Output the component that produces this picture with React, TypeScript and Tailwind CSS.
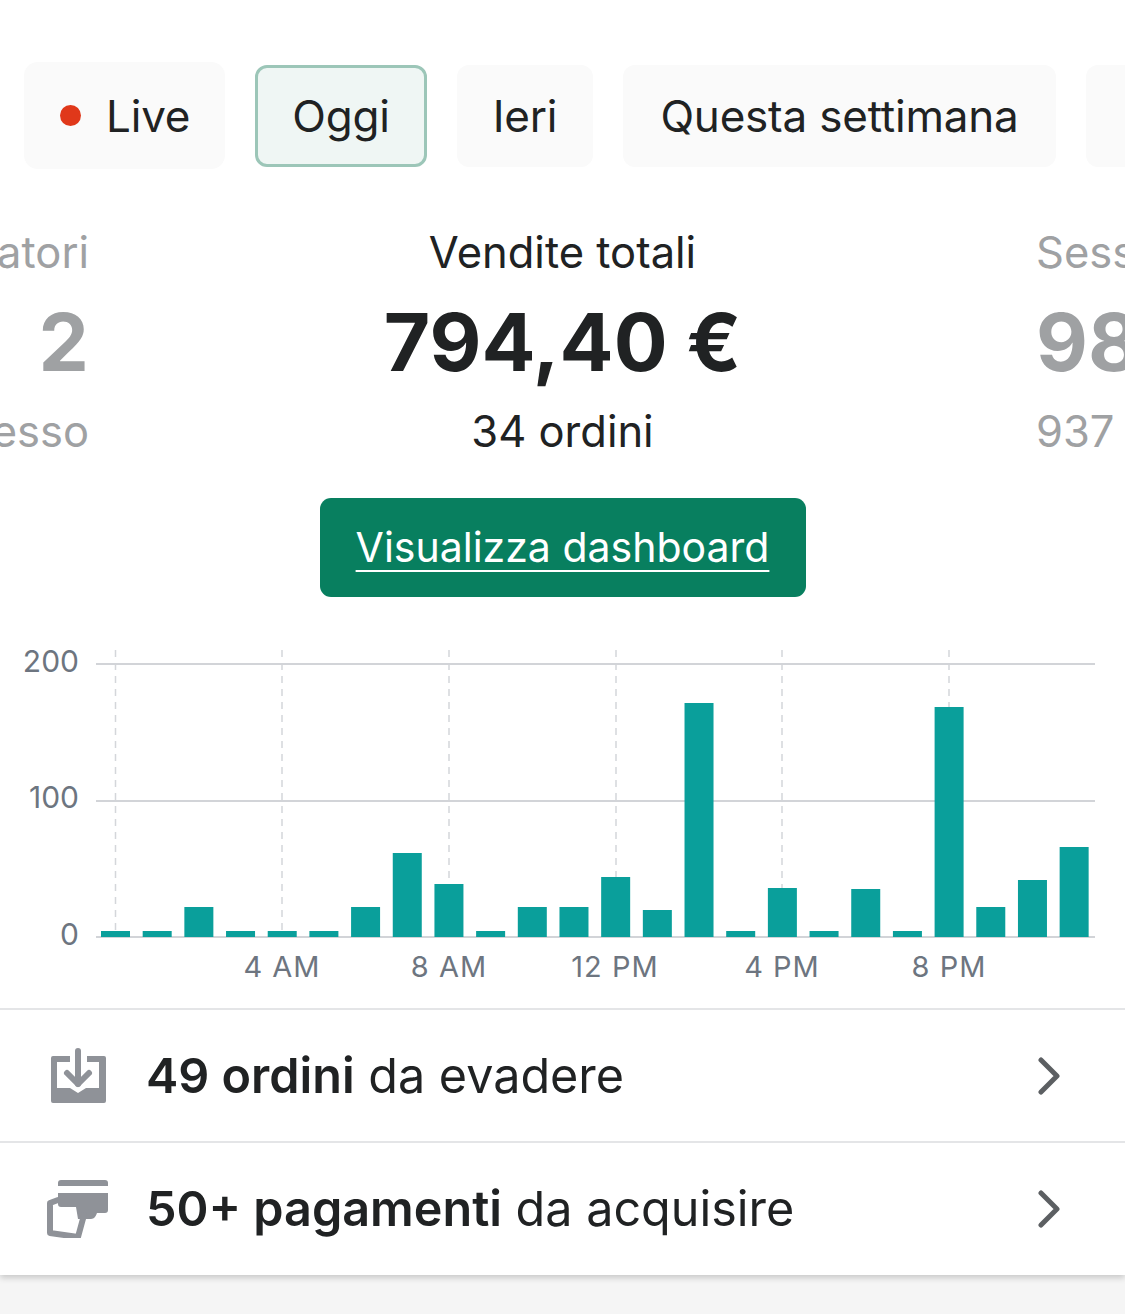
const tops = [931, 931, 907, 931, 931, 931, 907, 853, 884, 931, 907, 907, 877, 910, 703, 931, 888, 931, 889, 931, 707, 907, 880, 847];
const yLabels = [
  { label: "200", y: 672 },
  { label: "100", y: 808 },
  { label: "0", y: 945 },
];
const xLabels = [
  { label: "4 AM", x: 282 },
  { label: "8 AM", x: 449 },
  { label: "12 PM", x: 615 },
  { label: "4 PM", x: 782 },
  { label: "8 PM", x: 949 },
];

function Chart() {
  return (
    <svg viewBox="0 636 1125 372" className="block w-full h-[372px]" fontFamily="Inter, sans-serif">
      {[115.5, 282, 449, 616, 782, 949].map((x) => (
        <line key={x} x1={x} x2={x} y1={650} y2={937} stroke="#d4d6da" strokeWidth="1.5" strokeDasharray="7 6" />
      ))}
      {[664, 801, 937].map((y) => (
        <line key={y} x1={96} x2={1095} y1={y} y2={y} stroke="#d2d4d8" strokeWidth="2" />
      ))}
      {tops.map((top, i) => (
        <rect key={i} x={101 + i * 41.68} y={top} width={29} height={937 - top} fill="#0a9f9b" />
      ))}
      {yLabels.map((t) => (
        <text key={t.label} x={79} y={t.y} textAnchor="end" fontSize="30" fill="#6d7580">
          {t.label}
        </text>
      ))}
      {xLabels.map((t) => (
        <text key={t.label} x={t.x} y={977} textAnchor="middle" fontSize="29" letterSpacing="1" fill="#6d7580">
          {t.label}
        </text>
      ))}
    </svg>
  );
}

function InboxIcon() {
  return (
    <svg width="56" height="58" viewBox="0 0 56 58" fill="none">
      <path
        d="M3 9h17v6H7v26h13l8 5 8-5h13V15H37V9h17a2 2 0 0 1 2 2v43a2 2 0 0 1-2 2H3a2 2 0 0 1-2-2V11a2 2 0 0 1 2-2z"
        fill="#8f9298"
      />
      <path d="M28 4v33" stroke="#8f9298" strokeWidth="6" strokeLinecap="round" />
      <path d="M17 26l11 11 11-11" stroke="#8f9298" strokeWidth="6" strokeLinecap="round" strokeLinejoin="round" />
    </svg>
  );
}

function CardIcon() {
  return (
    <svg width="62" height="58" viewBox="0 0 62 58" fill="none">
      <path d="M14 0h44a3 3 0 0 1 3 3v3H11V3a3 3 0 0 1 3-3z" fill="#8f9298" />
      <path d="M11 13h50v17a3 3 0 0 1-3 3h-8c-1 3-3 6-6 6H31L29 27H14a3 3 0 0 1-3-3z" fill="#8f9298" />
      <path
        d="M11 20l-8 3v30l28 4 6-22"
        stroke="#8f9298"
        strokeWidth="6"
        strokeLinejoin="round"
        strokeLinecap="round"
      />
    </svg>
  );
}

function Chevron() {
  return (
    <svg width="24" height="38" viewBox="0 0 24 38" fill="none">
      <path d="M4 3l16 16L4 35" stroke="#5c5f62" strokeWidth="5" strokeLinecap="round" strokeLinejoin="round" />
    </svg>
  );
}

export default function App() {
  return (
    <div className="w-[1125px] h-[1314px] overflow-hidden bg-[#f5f5f5] font-['Inter',sans-serif] text-[#202223]">
      <div className="bg-white shadow-[0_3px_6px_rgba(0,0,0,0.18)]">
        {/* Date tabs */}
        <div className="flex items-center gap-[30px] pt-[62px] pl-[24px] overflow-hidden text-[44px] leading-[50px] tracking-[-0.2px]">
          <div className="flex items-center h-[107px] w-[201px] shrink-0 pl-[36px] rounded-[14px] bg-[#fafafa]">
            <span className="w-[21px] h-[21px] rounded-full bg-[#e0381a] mr-[25px]"></span>
            Live
          </div>
          <div className="flex items-center justify-center h-[102px] w-[172px] shrink-0 rounded-[12px] bg-[#eff6f4] border-[3px] border-[#9cc6b8]">
            Oggi
          </div>
          <div className="flex items-center justify-center h-[102px] w-[136px] shrink-0 rounded-[12px] bg-[#fafafa]">
            Ieri
          </div>
          <div className="flex items-center justify-center h-[102px] w-[433px] shrink-0 rounded-[12px] bg-[#fafafa] whitespace-nowrap">
            Questa settimana
          </div>
          <div className="h-[102px] w-[120px] shrink-0 rounded-[12px] bg-[#fafafa]"></div>
        </div>

        {/* Stats carousel */}
        <div className="grid grid-cols-[89px_1fr_89px] mt-[58px] text-center whitespace-nowrap">
          <div className="flex flex-col items-end overflow-hidden text-[#9fa1a3]">
            <p className="text-[43.5px] leading-[50px]">atori</p>
            <p className="text-[80px] leading-[90px] font-bold mt-[20px]">2</p>
            <p className="text-[43.5px] leading-[50px] mt-[19px]">esso</p>
          </div>
          <div className="flex flex-col items-center">
            <p className="text-[43.5px] leading-[50px]">Vendite totali</p>
            <p className="text-[80px] leading-[90px] font-bold mt-[20px]">794,40 €</p>
            <p className="text-[43.5px] leading-[50px] mt-[19px]">34 ordini</p>
            <a className="flex items-center justify-center w-[486px] h-[99px] mt-[42px] rounded-[11px] bg-[#087f5f] text-white underline underline-offset-[8px] decoration-2 text-[41px]">
              Visualizza dashboard
            </a>
          </div>
          <div className="flex flex-col items-start overflow-hidden text-[#9fa1a3]">
            <p className="text-[43.5px] leading-[50px]">Sessioni</p>
            <p className="text-[80px] leading-[90px] font-bold mt-[20px]">98</p>
            <p className="text-[43.5px] leading-[50px] mt-[19px]">937</p>
          </div>
        </div>

        <div className="mt-[39px]">
          <Chart />
        </div>

        {/* Task rows */}
        <div className="border-t-2 border-[#e4e5e7] h-[133px] flex items-center pl-[50px] pr-[64px]">
          <InboxIcon />
          <p className="ml-[40px] flex-1 text-[48.5px] leading-[56px]">
            <span className="font-semibold">49 ordini</span> da evadere
          </p>
          <Chevron />
        </div>
        <div className="border-t-2 border-[#e4e5e7] h-[134px] flex items-center pl-[47px] pr-[64px]">
          <CardIcon />
          <p className="ml-[37px] flex-1 text-[48.5px] leading-[56px]">
            <span className="font-semibold">50+ pagamenti</span> da acquisire
          </p>
          <Chevron />
        </div>
      </div>
    </div>
  );
}
